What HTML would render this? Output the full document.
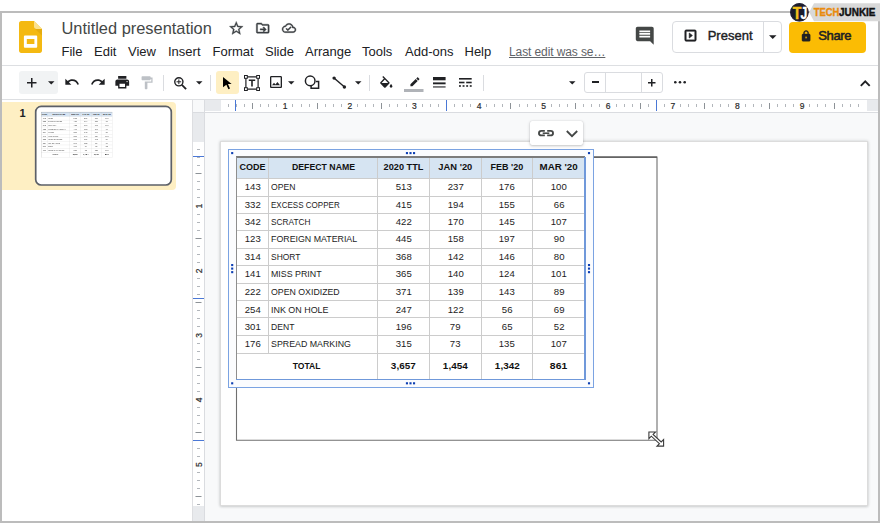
<!DOCTYPE html>
<html lang="en">
<head>
<meta charset="utf-8">
<title>Untitled presentation - Google Slides</title>
<style>
*{box-sizing:border-box;margin:0;padding:0}
html,body{width:884px;height:523px;background:#fff;overflow:hidden}
body{position:relative;font-family:"Liberation Sans",Arial,sans-serif;color:#202124}
.abs{position:absolute}
#frame{left:0;top:11px;width:880px;height:512px;border:2px solid #bcbcbc;background:#fff}
#hdrline{left:2px;top:65px;width:876px;height:1px;background:#dddfe2}
#tbline{left:2px;top:99px;width:876px;height:1px;background:#dddfe2}
#title{left:61.500px;top:17px;font-size:16.400px;line-height:22px;color:#444746;white-space:nowrap}
.menu{top:43.500px;font-size:13px;line-height:16px;color:#202124;white-space:nowrap}
#lastedit{color:#5f6368;text-decoration:underline;font-size:12px;letter-spacing:-.1px}
svg{display:block;position:absolute;overflow:visible}
.sep{width:1px;top:74.500px;height:16.500px;background:#dadce0}
#present{left:672px;top:21px;width:110px;height:32px;border:1px solid #dadce0;border-radius:4px;background:#fff}
#presentdiv{left:763px;top:22px;width:1px;height:30px;background:#dadce0}
#presenttxt{left:707.700px;top:28px;font-size:13px;line-height:16px;color:#202124;-webkit-text-stroke:.4px #202124}
#share{left:789px;top:21.500px;width:77px;height:31px;border-radius:4px;background:#fbbc04}
#sharetxt{left:818.300px;top:28px;font-size:13px;line-height:16px;color:#202124;-webkit-text-stroke:.55px #202124;letter-spacing:-.4px}
#panelsel{left:2px;top:102px;width:174px;height:88px;background:#feefc3;border-radius:0 4px 4px 0}
#thumb{left:35.500px;top:106.200px;width:136px;height:79px;border-radius:6px;background:#fff;overflow:hidden}
#slidenum{left:19.500px;top:106px;font-size:11px;line-height:14px;font-weight:bold;color:#202124}
#paneldiv{left:191px;top:100px;width:1px;height:421px;background:#e4e5e7}
#canvas{left:192px;top:100px;width:686px;height:421px;background:#f8f9fa}
#hruler{left:204px;top:100px;width:674px;height:12.500px;background:#fff;border-bottom:1px solid #dadce0;overflow:hidden}
#vruler{left:192px;top:112px;width:13px;height:409px;background:#fff;border-right:1px solid #dadce0;border-left:1px solid #dddee1;overflow:hidden}
#rcorner{left:192px;top:100px;width:13px;height:12.500px;background:#f8f9fa;border-right:1px solid #dadce0;border-bottom:1px solid #dadce0;border-left:1px solid #dddee1}
.rgrey{background:#e8eaed}
#slide{left:220px;top:141px;width:648px;height:365px;background:#fff;border:1px solid #dcdcdc;box-shadow:0 0 3px rgba(60,64,67,.22),0 1px 2px rgba(60,64,67,.12)}

.tbl{position:absolute;font-family:"Liberation Sans",Arial,sans-serif;font-size:9px;color:#1c1c1c}
.tl{position:absolute}
.tc{position:absolute;text-align:center;white-space:nowrap;overflow:visible}
.tc span{display:inline-block;transform:scaleX(.945);transform-origin:50% 50%}
.tc.tlft{text-align:left;padding-left:2.300px}
.tc.tlft span{transform-origin:0 50%}
.tb{font-weight:bold;color:#111}
.tb span{transform:scaleX(.98)}
.tn{font-size:9.300px}
.tn span{transform:scaleX(1.03)}
.tc.tlft span{transform:scaleX(.96)}
.hd{width:2px;height:2px;background:#0f41b4}
.hd{width:2px;height:2px;background:#0f41b4}
</style>
</head>
<body>
<div id="frame" class="abs"></div>

<!-- header -->
<div id="title" class="abs">Untitled presentation</div>
<div class="abs menu" style="left:61.5px">File</div>
<div class="abs menu" style="left:94px">Edit</div>
<div class="abs menu" style="left:128px">View</div>
<div class="abs menu" style="left:168px">Insert</div>
<div class="abs menu" style="left:212.5px">Format</div>
<div class="abs menu" style="left:265px">Slide</div>
<div class="abs menu" style="left:305px">Arrange</div>
<div class="abs menu" style="left:362px">Tools</div>
<div class="abs menu" style="left:405px">Add-ons</div>
<div class="abs menu" style="left:464.5px">Help</div>
<div class="abs menu" id="lastedit" style="left:509px">Last edit was se…</div>

<div id="present" class="abs"></div>
<div id="presentdiv" class="abs"></div>
<div id="share" class="abs"></div>
<!-- slides logo -->
<svg class="abs" style="left:19px;top:20.5px" width="23" height="32" viewBox="0 0 23 32">
 <path d="M2.2 0H15l8 8v21.8c0 1.2-1 2.2-2.2 2.2H2.2C1 32 0 31 0 29.800V2.200C0 1 1 0 2.200 0z" fill="#f4b912"/>
 <path d="M15 0l8 8h-5.800C16 8 15 7 15 5.800z" fill="#fbe18d"/>
 <path d="M15.600 7.400L23 14.500V8h-6z" fill="#d9a20d" opacity=".55"/>
 <path d="M5.900 14.600h11.300a1 1 0 0 1 1 1v10.200a1 1 0 0 1-1 1H5.900a1 1 0 0 1-1-1V15.600a1 1 0 0 1 1-1zm1.900 3.500v5h7.600v-5z" fill="#fff" fill-rule="evenodd"/>
</svg>
<!-- star -->
<svg class="abs" style="left:228.350px;top:19.950px" width="16.500" height="16.500" viewBox="0 0 24 24"><path fill="#3c4043" stroke="#3c4043" stroke-width=".5" d="M22 9.240l-7.190-.62L12 2 9.190 8.630 2 9.240l5.460 4.730L5.820 21 12 17.270 18.180 21l-1.630-7.030L22 9.240zM12 15.400l-3.760 2.270 1-4.280-3.320-2.880 4.380-.38L12 6.100l1.710 4.040 4.380.38-3.320 2.880 1 4.280L12 15.400z"/></svg>
<!-- move to folder -->
<svg class="abs" style="left:254.500px;top:20.900px" width="15.500" height="15.500" viewBox="0 0 24 24"><path fill="#3c4043" stroke="#3c4043" stroke-width=".6" d="M20 6h-8l-2-2H4c-1.100 0-2 .9-2 2v12c0 1.100.9 2 2 2h16c1.100 0 2-.9 2-2V8c0-1.100-.9-2-2-2zm0 12H4V6h5.170l2 2H20v10zm-7.840-1.410L13.580 18l4-4-4-4-1.410 1.410L13.750 13H8v2h5.750l-1.590 1.590z" transform="translate(0 -1)"/></svg>
<!-- cloud done -->
<svg class="abs" style="left:282px;top:20.970px" width="14" height="14" viewBox="0 0 24 24"><path fill="#3c4043" stroke="#3c4043" stroke-width=".6" d="M19.350 10.040C18.670 6.590 15.640 4 12 4 9.110 4 6.600 5.640 5.350 8.040 2.340 8.360 0 10.910 0 14c0 3.310 2.690 6 6 6h13c2.760 0 5-2.240 5-5 0-2.640-2.050-4.780-4.650-4.960zM19 18H6c-2.210 0-4-1.790-4-4s1.790-4 4-4h.71C7.370 7.690 9.480 6 12 6c3.040 0 5.500 2.460 5.500 5.500v.5H19c1.660 0 3 1.340 3 3s-1.340 3-3 3zm-9-3.820l-2.090-2.090L6.500 13.500 10 17l6.010-6.010-1.410-1.410z"/></svg>
<!-- comment -->
<svg class="abs" style="left:633.900px;top:25px" width="21.500" height="21.500" viewBox="0 0 24 24"><path fill="#444746" d="M21.990 4c0-1.100-.89-2-1.990-2H4c-1.100 0-2 .9-2 2v12c0 1.100.9 2 2 2h14l4 4-.01-18zM18 14H6v-2h12v2zm0-3H6V9h12v2zm0-3H6V6h12v2z"/></svg>
<!-- present icon -->
<svg class="abs" style="left:682.600px;top:28.300px" width="15" height="15" viewBox="0 0 24 24"><path fill="#202124" stroke="#202124" stroke-width="1.100" d="M10 8v8l5-4-5-4zm9-5H5c-1.100 0-2 .9-2 2v14c0 1.100.9 2 2 2h14c1.100 0 2-.9 2-2V5c0-1.100-.9-2-2-2zm0 16H5V5h14v14z"/></svg>
<svg class="abs" style="left:769px;top:35px" width="7.500" height="4" viewBox="0 0 10 5"><path fill="#202124" d="M0 0h10L5 5z"/></svg>
<!-- lock -->
<svg class="abs" style="left:799.900px;top:29.950px" width="12.200" height="12.200" viewBox="0 0 24 24"><path fill="#202124" stroke="#202124" stroke-width=".9" d="M18 8h-1V6c0-2.760-2.240-5-5-5S7 3.240 7 6v2H6c-1.100 0-2 .9-2 2v10c0 1.100.9 2 2 2h12c1.100 0 2-.9 2-2V10c0-1.100-.9-2-2-2zm-6 9c-1.100 0-2-.9-2-2s.9-2 2-2 2 .9 2 2-.9 2-2 2zm3.100-9H8.900V6c0-1.710 1.390-3.100 3.100-3.100 1.710 0 3.100 1.390 3.100 3.100v2z"/></svg>
<div id="hdrline" class="abs"></div>
<div id="presenttxt" class="abs">Present</div>
<div id="sharetxt" class="abs">Share</div>

<!-- toolbar -->

<div class="abs" style="left:19px;top:71px;width:39px;height:23px;background:#f1f3f4;border-radius:3px"></div>
<!-- plus -->
<svg class="abs" style="left:27px;top:78px" width="9.500" height="9.500" viewBox="0 0 10 10"><path fill="#202124" d="M4.200 0h1.600v4.200H10v1.600H5.800V10H4.200V5.800H0V4.200h4.200z"/></svg>
<svg class="abs" style="left:47.500px;top:81.300px" width="6.500" height="3.500" viewBox="0 0 10 5"><path fill="#202124" d="M0 0h10L5 5z"/></svg>
<!-- undo -->
<svg class="abs" style="left:64.300px;top:74.200px" width="16" height="16" viewBox="0 0 24 24"><path fill="#202124" d="M12.500 8c-2.650 0-5.050.99-6.900 2.600L2 7v9h9l-3.620-3.620c1.390-1.160 3.160-1.880 5.120-1.880 3.540 0 6.550 2.310 7.600 5.500l2.370-.78C21.080 11.030 17.150 8 12.500 8z"/></svg>
<!-- redo -->
<svg class="abs" style="left:89.900px;top:74.200px" width="16" height="16" viewBox="0 0 24 24"><path fill="#202124" d="M18.400 10.600C16.550 8.990 14.150 8 11.500 8c-4.650 0-8.580 3.030-9.960 7.220L3.900 16c1.050-3.190 4.050-5.500 7.600-5.500 1.950 0 3.730.72 5.120 1.880L13 16h9V7l-3.600 3.600z"/></svg>
<!-- print -->
<svg class="abs" style="left:113.800px;top:74.450px" width="16.500" height="16.500" viewBox="0 0 24 24"><path fill="#202124" d="M19 8H5c-1.660 0-3 1.340-3 3v6h4v4h12v-4h4v-6c0-1.660-1.340-3-3-3zm-3 11H8v-5h8v5zm3-7c-.55 0-1-.45-1-1s.45-1 1-1 1 .45 1 1-.45 1-1 1zm-1-9H6v4h12V3z"/></svg>
<!-- paint format -->
<svg class="abs" style="left:139px;top:75px" width="15.500" height="15.500" viewBox="0 0 24 24"><path fill="#bdc1c6" d="M18 4V3c0-.55-.45-1-1-1H5c-.55 0-1 .45-1 1v4c0 .55.450 1 1 1h12c.55 0 1-.45 1-1V6h1v4H9v11c0 .55.450 1 1 1h2c.55 0 1-.45 1-1v-9h8V4h-3z"/></svg>
<div class="abs sep" style="left:163px"></div>
<!-- zoom -->
<svg class="abs" style="left:173px;top:75.600px" width="15" height="15" viewBox="0 0 15 15"><g fill="none" stroke="#202124"><circle cx="5.850" cy="5.800" r="4.100" stroke-width="1.400"/><path d="M8.900 8.900l4.200 4.200" stroke-width="1.800"/><path d="M3.500 5.800h4.700M5.850 3.450v4.700" stroke-width="1"/></g></svg>
<svg class="abs" style="left:196px;top:81.300px" width="6.500" height="3.500" viewBox="0 0 10 5"><path fill="#202124" d="M0 0h10L5 5z"/></svg>
<div class="abs sep" style="left:210.400px"></div>
<!-- select -->
<div class="abs" style="left:216px;top:71px;width:23px;height:23px;background:#feefc3;border-radius:3px"></div>
<svg class="abs" style="left:223.300px;top:76.600px" width="8.900" height="12.200" viewBox="0 0 9.500 13"><path fill="#000" d="M0 0l9.200 7.600H5.300l2.200 4.600-1.700.8-2.200-4.700L0 11z"/></svg>
<!-- text box -->
<svg class="abs" style="left:244.400px;top:75.300px" width="16" height="16" viewBox="0 0 16 16"><g fill="none" stroke="#202124" stroke-width="1.200"><path d="M1.900 1.900h12.200v12.200H1.900z"/></g><g fill="#fff" stroke="#202124" stroke-width="1"><rect x=".5" y=".5" width="2.800" height="2.800"/><rect x="12.700" y=".5" width="2.800" height="2.800"/><rect x=".5" y="12.700" width="2.800" height="2.800"/><rect x="12.700" y="12.700" width="2.800" height="2.800"/></g><path fill="#202124" d="M4.800 4.600h6.400v1.500H8.800v5.400H7.200V6.100H4.800z"/></svg>
<!-- image -->
<svg class="abs" style="left:268px;top:74.400px" width="16" height="16" viewBox="0 0 24 24"><path fill="#202124" d="M19 5v14H5V5h14m0-2H5c-1.100 0-2 .9-2 2v14c0 1.100.9 2 2 2h14c1.100 0 2-.9 2-2V5c0-1.100-.9-2-2-2zm-4.860 8.860l-3 3.870L9 13.140 6 17h12l-3.860-5.140z"/></svg>
<svg class="abs" style="left:288px;top:81.300px" width="6.500" height="3.500" viewBox="0 0 10 5"><path fill="#202124" d="M0 0h10L5 5z"/></svg>
<!-- shape -->
<svg class="abs" style="left:304.300px;top:75px" width="16" height="16" viewBox="0 0 16 16"><g fill="none" stroke="#202124" stroke-width="1.500"><circle cx="6.200" cy="5.900" r="4.800"/><path d="M12 6.600h2.600v6.600H7.100v-2.400"/></g></svg>
<!-- line -->
<svg class="abs" style="left:331.800px;top:76.200px" width="15" height="13" viewBox="0 0 15 13"><path stroke="#202124" stroke-width="1.500" d="M2 2l10.500 9"/><circle cx="2.100" cy="2.100" r="1.700" fill="#202124"/><circle cx="12.400" cy="11" r="1.700" fill="#202124"/></svg>
<svg class="abs" style="left:354.500px;top:81.300px" width="6.500" height="3.500" viewBox="0 0 10 5"><path fill="#202124" d="M0 0h10L5 5z"/></svg>
<div class="abs sep" style="left:369px"></div>
<!-- fill -->
<svg class="abs" style="left:377.500px;top:76.300px" width="16.500" height="16.500" viewBox="0 0 24 24"><path fill="#202124" d="M16.560 8.940L7.620 0 6.210 1.410l2.380 2.380-5.150 5.150c-.59.590-.59 1.540 0 2.120l5.500 5.500c.29.290.68.440 1.060.44s.77-.15 1.060-.44l5.500-5.500c.59-.58.590-1.530 0-2.120zM5.210 10L10 5.210 14.790 10H5.210zM19 11.500s-2 2.170-2 3.500c0 1.100.9 2 2 2s2-.9 2-2c0-1.330-2-3.500-2-3.500z"/></svg>
<!-- border colour -->
<svg class="abs" style="left:403.500px;top:76.500px" width="19.500" height="15" viewBox="0 0 19.500 15"><path fill="#202124" transform="translate(4.300 0.300) scale(.53)" d="M17.750 7L14 3.250l-10 10V17h3.750l10-10zm2.960-2.960c.39-.39.390-1.020 0-1.410L18.370.29c-.39-.39-1.020-.39-1.410 0L15 2.250 18.750 6l1.960-1.960z"/><rect x="0" y="12" width="19.500" height="3" fill="#b0b3b8"/></svg>
<!-- border weight -->
<svg class="abs" style="left:432.900px;top:77px" width="12.600" height="11" viewBox="0 0 12.600 11"><g fill="#202124"><rect x="0" y="0" width="12.600" height="3.300"/><rect x="0" y="5.400" width="12.600" height="1.900"/><rect x="0" y="9.400" width="12.600" height="1.100"/></g></svg>
<!-- border dash -->
<svg class="abs" style="left:459.100px;top:78.400px" width="12.700" height="9" viewBox="0 0 12.700 9"><g fill="#202124"><rect x="0" y="0" width="12.700" height="1.600"/><rect x="0" y="3.700" width="5.500" height="1.600"/><rect x="7.200" y="3.700" width="5.500" height="1.600"/><rect x="0" y="7.200" width="1.900" height="1.600"/><rect x="3.600" y="7.200" width="1.900" height="1.600"/><rect x="7.200" y="7.200" width="1.900" height="1.600"/><rect x="10.800" y="7.200" width="1.900" height="1.600"/></g></svg>
<div class="abs sep" style="left:483px"></div>
<svg class="abs" style="left:569px;top:81.300px" width="6.500" height="3.500" viewBox="0 0 10 5"><path fill="#202124" d="M0 0h10L5 5z"/></svg>
<!-- font size box -->
<div class="abs" style="left:584px;top:72px;width:79px;height:21px;border:1px solid #dadce0;border-radius:3px;background:#fff"></div>
<div class="abs" style="left:605px;top:73px;width:1px;height:19px;background:#dadce0"></div>
<div class="abs" style="left:641px;top:73px;width:1px;height:19px;background:#dadce0"></div>
<div class="abs" style="left:591.500px;top:81.200px;width:7.500px;height:2px;background:#202124"></div>
<svg class="abs" style="left:647.500px;top:79px" width="7.500" height="7.500" viewBox="0 0 10 10"><path fill="#202124" d="M4 0h2v4h4v2H6v4H4V6H0V4h4z"/></svg>
<!-- more -->
<svg class="abs" style="left:673.500px;top:81.200px" width="12" height="2.600" viewBox="0 0 12 2.600"><g fill="#202124"><circle cx="1.300" cy="1.300" r="1.300"/><circle cx="6" cy="1.300" r="1.300"/><circle cx="10.700" cy="1.300" r="1.300"/></g></svg>
<!-- collapse chevron -->
<svg class="abs" style="left:860px;top:80px" width="10.500" height="6.500" viewBox="0 0 10.500 6.500"><path fill="none" stroke="#202124" stroke-width="1.900" d="M.8 5.800l4.450-4.500 4.450 4.500"/></svg>
<div id="tbline" class="abs"></div>

<!-- left panel -->
<div id="panelsel" class="abs"></div>
<div id="slidenum" class="abs">1</div>
<div id="thumb" class="abs"></div>
<div id="tbl2" class="tbl" style="left:41.400px;top:112.300px;width:349px;height:223px;transform:scale(.2042);transform-origin:0 0;color:#444">
<div class="tl" style="left:0;top:0;width:348.6px;height:21.6px;background:#d6e4f2"></div>
<div class="tl" style="left:0;top:21.1px;width:348.6px;height:1px;background:#cccccc"></div>
<div class="tl" style="left:0;top:38.9px;width:348.6px;height:1px;background:#cccccc"></div>
<div class="tl" style="left:0;top:56.1px;width:348.6px;height:1px;background:#cccccc"></div>
<div class="tl" style="left:0;top:73.3px;width:348.6px;height:1px;background:#cccccc"></div>
<div class="tl" style="left:0;top:91.0px;width:348.6px;height:1px;background:#cccccc"></div>
<div class="tl" style="left:0;top:108.3px;width:348.6px;height:1px;background:#cccccc"></div>
<div class="tl" style="left:0;top:125.8px;width:348.6px;height:1px;background:#cccccc"></div>
<div class="tl" style="left:0;top:143.5px;width:348.6px;height:1px;background:#cccccc"></div>
<div class="tl" style="left:0;top:160.7px;width:348.6px;height:1px;background:#cccccc"></div>
<div class="tl" style="left:0;top:178.1px;width:348.6px;height:1px;background:#cccccc"></div>
<div class="tl" style="left:0;top:196.0px;width:348.6px;height:1px;background:#cccccc"></div>
<div class="tl" style="left:32.3px;top:0;width:1px;height:196.5px;background:#cccccc"></div>
<div class="tl" style="left:140.8px;top:0;width:1px;height:222.5px;background:#cccccc"></div>
<div class="tl" style="left:192.8px;top:0;width:1px;height:222.5px;background:#cccccc"></div>
<div class="tl" style="left:244.5px;top:0;width:1px;height:222.5px;background:#cccccc"></div>
<div class="tl" style="left:296.0px;top:0;width:1px;height:222.5px;background:#cccccc"></div>
<div class="tl" style="left:0;top:-0.600px;width:348.6px;height:1.900px;background:#7c7c7c"></div>
<div class="tl" style="left:-0.200px;top:0;width:1.100px;height:222.5px;background:#8e8e8e"></div>
<div class="tl" style="left:348.2px;top:0;width:1.300px;height:223.4px;background:#cccccc"></div>
<div class="tl" style="left:0;top:222.1px;width:349.5px;height:1.300px;background:#cccccc"></div>
<div class="tc tb" style="left:0.0px;top:0.6px;width:32.8px;height:21.6px;line-height:21.6px;"><span style="transform:scaleX(1.000)">CODE</span></div>
<div class="tc tb" style="left:32.8px;top:0.6px;width:108.5px;height:21.6px;line-height:21.6px;"><span style="transform:scaleX(0.970)">DEFECT NAME</span></div>
<div class="tc tb" style="left:141.3px;top:0.6px;width:52.0px;height:21.6px;line-height:21.6px;"><span style="transform:scaleX(1.020)">2020 TTL</span></div>
<div class="tc tb" style="left:193.3px;top:0.6px;width:51.7px;height:21.6px;line-height:21.6px;"><span style="transform:scaleX(1.040)">JAN '20</span></div>
<div class="tc tb" style="left:245.0px;top:0.6px;width:51.5px;height:21.6px;line-height:21.6px;"><span style="transform:scaleX(1.000)">FEB '20</span></div>
<div class="tc tb" style="left:296.5px;top:0.6px;width:52.1px;height:21.6px;line-height:21.6px;"><span style="transform:scaleX(1.086)">MAR '20</span></div>
<div class="tc tn" style="left:0.0px;top:22.4px;width:32.8px;height:17.8px;line-height:17.8px;"><span>143</span></div>
<div class="tc tlft" style="left:32.8px;top:22.4px;width:108.5px;height:17.8px;line-height:17.8px;"><span style="transform:scaleX(0.956)">OPEN</span></div>
<div class="tc tn" style="left:141.3px;top:22.4px;width:52.0px;height:17.8px;line-height:17.8px;"><span>513</span></div>
<div class="tc tn" style="left:193.3px;top:22.4px;width:51.7px;height:17.8px;line-height:17.8px;"><span>237</span></div>
<div class="tc tn" style="left:245.0px;top:22.4px;width:51.5px;height:17.8px;line-height:17.8px;"><span>176</span></div>
<div class="tc tn" style="left:296.5px;top:22.4px;width:52.1px;height:17.8px;line-height:17.8px;"><span>100</span></div>
<div class="tc tn" style="left:0.0px;top:40.2px;width:32.8px;height:17.2px;line-height:17.2px;"><span>332</span></div>
<div class="tc tlft" style="left:32.8px;top:40.2px;width:108.5px;height:17.2px;line-height:17.2px;"><span style="transform:scaleX(0.892)">EXCESS COPPER</span></div>
<div class="tc tn" style="left:141.3px;top:40.2px;width:52.0px;height:17.2px;line-height:17.2px;"><span>415</span></div>
<div class="tc tn" style="left:193.3px;top:40.2px;width:51.7px;height:17.2px;line-height:17.2px;"><span>194</span></div>
<div class="tc tn" style="left:245.0px;top:40.2px;width:51.5px;height:17.2px;line-height:17.2px;"><span>155</span></div>
<div class="tc tn" style="left:296.5px;top:40.2px;width:52.1px;height:17.2px;line-height:17.2px;"><span>66</span></div>
<div class="tc tn" style="left:0.0px;top:57.4px;width:32.8px;height:17.2px;line-height:17.2px;"><span>342</span></div>
<div class="tc tlft" style="left:32.8px;top:57.4px;width:108.5px;height:17.2px;line-height:17.2px;"><span style="transform:scaleX(0.920)">SCRATCH</span></div>
<div class="tc tn" style="left:141.3px;top:57.4px;width:52.0px;height:17.2px;line-height:17.2px;"><span>422</span></div>
<div class="tc tn" style="left:193.3px;top:57.4px;width:51.7px;height:17.2px;line-height:17.2px;"><span>170</span></div>
<div class="tc tn" style="left:245.0px;top:57.4px;width:51.5px;height:17.2px;line-height:17.2px;"><span>145</span></div>
<div class="tc tn" style="left:296.5px;top:57.4px;width:52.1px;height:17.2px;line-height:17.2px;"><span>107</span></div>
<div class="tc tn" style="left:0.0px;top:74.6px;width:32.8px;height:17.7px;line-height:17.7px;"><span>123</span></div>
<div class="tc tlft" style="left:32.8px;top:74.6px;width:108.5px;height:17.7px;line-height:17.7px;"><span style="transform:scaleX(0.981)">FOREIGN MATERIAL</span></div>
<div class="tc tn" style="left:141.3px;top:74.6px;width:52.0px;height:17.7px;line-height:17.7px;"><span>445</span></div>
<div class="tc tn" style="left:193.3px;top:74.6px;width:51.7px;height:17.7px;line-height:17.7px;"><span>158</span></div>
<div class="tc tn" style="left:245.0px;top:74.6px;width:51.5px;height:17.7px;line-height:17.7px;"><span>197</span></div>
<div class="tc tn" style="left:296.5px;top:74.6px;width:52.1px;height:17.7px;line-height:17.7px;"><span>90</span></div>
<div class="tc tn" style="left:0.0px;top:92.3px;width:32.8px;height:17.3px;line-height:17.3px;"><span>314</span></div>
<div class="tc tlft" style="left:32.8px;top:92.3px;width:108.5px;height:17.3px;line-height:17.3px;"><span style="transform:scaleX(0.938)">SHORT</span></div>
<div class="tc tn" style="left:141.3px;top:92.3px;width:52.0px;height:17.3px;line-height:17.3px;"><span>368</span></div>
<div class="tc tn" style="left:193.3px;top:92.3px;width:51.7px;height:17.3px;line-height:17.3px;"><span>142</span></div>
<div class="tc tn" style="left:245.0px;top:92.3px;width:51.5px;height:17.3px;line-height:17.3px;"><span>146</span></div>
<div class="tc tn" style="left:296.5px;top:92.3px;width:52.1px;height:17.3px;line-height:17.3px;"><span>80</span></div>
<div class="tc tn" style="left:0.0px;top:109.6px;width:32.8px;height:17.5px;line-height:17.5px;"><span>141</span></div>
<div class="tc tlft" style="left:32.8px;top:109.6px;width:108.5px;height:17.5px;line-height:17.5px;"><span style="transform:scaleX(0.982)">MISS PRINT</span></div>
<div class="tc tn" style="left:141.3px;top:109.6px;width:52.0px;height:17.5px;line-height:17.5px;"><span>365</span></div>
<div class="tc tn" style="left:193.3px;top:109.6px;width:51.7px;height:17.5px;line-height:17.5px;"><span>140</span></div>
<div class="tc tn" style="left:245.0px;top:109.6px;width:51.5px;height:17.5px;line-height:17.5px;"><span>124</span></div>
<div class="tc tn" style="left:296.5px;top:109.6px;width:52.1px;height:17.5px;line-height:17.5px;"><span>101</span></div>
<div class="tc tn" style="left:0.0px;top:127.1px;width:32.8px;height:17.7px;line-height:17.7px;"><span>222</span></div>
<div class="tc tlft" style="left:32.8px;top:127.1px;width:108.5px;height:17.7px;line-height:17.7px;"><span style="transform:scaleX(0.974)">OPEN OXIDIZED</span></div>
<div class="tc tn" style="left:141.3px;top:127.1px;width:52.0px;height:17.7px;line-height:17.7px;"><span>371</span></div>
<div class="tc tn" style="left:193.3px;top:127.1px;width:51.7px;height:17.7px;line-height:17.7px;"><span>139</span></div>
<div class="tc tn" style="left:245.0px;top:127.1px;width:51.5px;height:17.7px;line-height:17.7px;"><span>143</span></div>
<div class="tc tn" style="left:296.5px;top:127.1px;width:52.1px;height:17.7px;line-height:17.7px;"><span>89</span></div>
<div class="tc tn" style="left:0.0px;top:144.8px;width:32.8px;height:17.2px;line-height:17.2px;"><span>254</span></div>
<div class="tc tlft" style="left:32.8px;top:144.8px;width:108.5px;height:17.2px;line-height:17.2px;"><span style="transform:scaleX(0.991)">INK ON HOLE</span></div>
<div class="tc tn" style="left:141.3px;top:144.8px;width:52.0px;height:17.2px;line-height:17.2px;"><span>247</span></div>
<div class="tc tn" style="left:193.3px;top:144.8px;width:51.7px;height:17.2px;line-height:17.2px;"><span>122</span></div>
<div class="tc tn" style="left:245.0px;top:144.8px;width:51.5px;height:17.2px;line-height:17.2px;"><span>56</span></div>
<div class="tc tn" style="left:296.5px;top:144.8px;width:52.1px;height:17.2px;line-height:17.2px;"><span>69</span></div>
<div class="tc tn" style="left:0.0px;top:162.0px;width:32.8px;height:17.4px;line-height:17.4px;"><span>301</span></div>
<div class="tc tlft" style="left:32.8px;top:162.0px;width:108.5px;height:17.4px;line-height:17.4px;"><span style="transform:scaleX(0.955)">DENT</span></div>
<div class="tc tn" style="left:141.3px;top:162.0px;width:52.0px;height:17.4px;line-height:17.4px;"><span>196</span></div>
<div class="tc tn" style="left:193.3px;top:162.0px;width:51.7px;height:17.4px;line-height:17.4px;"><span>79</span></div>
<div class="tc tn" style="left:245.0px;top:162.0px;width:51.5px;height:17.4px;line-height:17.4px;"><span>65</span></div>
<div class="tc tn" style="left:296.5px;top:162.0px;width:52.1px;height:17.4px;line-height:17.4px;"><span>52</span></div>
<div class="tc tn" style="left:0.0px;top:179.4px;width:32.8px;height:17.9px;line-height:17.9px;"><span>176</span></div>
<div class="tc tlft" style="left:32.8px;top:179.4px;width:108.5px;height:17.9px;line-height:17.9px;"><span style="transform:scaleX(0.980)">SPREAD MARKING</span></div>
<div class="tc tn" style="left:141.3px;top:179.4px;width:52.0px;height:17.9px;line-height:17.9px;"><span>315</span></div>
<div class="tc tn" style="left:193.3px;top:179.4px;width:51.7px;height:17.9px;line-height:17.9px;"><span>73</span></div>
<div class="tc tn" style="left:245.0px;top:179.4px;width:51.5px;height:17.9px;line-height:17.9px;"><span>135</span></div>
<div class="tc tn" style="left:296.5px;top:179.4px;width:52.1px;height:17.9px;line-height:17.9px;"><span>107</span></div>
<div class="tc tb" style="left:0.0px;top:195.9px;width:141.3px;height:26.0px;line-height:26.0px;"><span style="transform:scaleX(0.950)">TOTAL</span></div>
<div class="tc tb" style="left:141.3px;top:195.9px;width:52.0px;height:26.0px;line-height:26.0px;"><span style="transform:scaleX(1.100)">3,657</span></div>
<div class="tc tb" style="left:193.3px;top:195.9px;width:51.7px;height:26.0px;line-height:26.0px;"><span style="transform:scaleX(1.100)">1,454</span></div>
<div class="tc tb" style="left:245.0px;top:195.9px;width:51.5px;height:26.0px;line-height:26.0px;"><span style="transform:scaleX(1.100)">1,342</span></div>
<div class="tc tb" style="left:296.5px;top:195.9px;width:52.1px;height:26.0px;line-height:26.0px;"><span style="transform:scaleX(1.150)">861</span></div>
</div>

<svg class="abs" style="left:0;top:0" width="200" height="200" viewBox="0 0 200 200"><rect x="35.700" y="106.400" width="135.600" height="78.600" rx="5.500" fill="none" stroke="#5c6068" stroke-width="1.700"/></svg>

<!-- canvas -->
<div id="canvas" class="abs"></div>
<div id="hruler" class="abs"><div class="abs rgrey" style="left:0;top:0;width:16.6px;height:11px"></div><div class="abs rgrey" style="left:663.0px;top:0;width:20px;height:11px"></div><svg class="abs" style="left:0;top:0" width="674" height="11" viewBox="0 0 674 11" font-family="Liberation Sans, sans-serif" font-size="8.500" fill="#2b2b2b" stroke="#2b2b2b" stroke-width=".2"><rect x="24" y="4" width="1" height="3" fill="#b2b6bb" stroke="none"/><rect x="32" y="4" width="1" height="3" fill="#b2b6bb" stroke="none"/><rect x="40" y="4" width="1" height="3" fill="#b2b6bb" stroke="none"/><rect x="48" y="3" width="1" height="6" fill="#8d9297" stroke="none"/><rect x="56" y="4" width="1" height="3" fill="#b2b6bb" stroke="none"/><rect x="64" y="4" width="1" height="3" fill="#b2b6bb" stroke="none"/><rect x="72" y="4" width="1" height="3" fill="#b2b6bb" stroke="none"/><text x="81.2" y="9.1" text-anchor="middle">1</text><rect x="88" y="4" width="1" height="3" fill="#b2b6bb" stroke="none"/><rect x="97" y="4" width="1" height="3" fill="#b2b6bb" stroke="none"/><rect x="105" y="4" width="1" height="3" fill="#b2b6bb" stroke="none"/><rect x="113" y="3" width="1" height="6" fill="#8d9297" stroke="none"/><rect x="121" y="4" width="1" height="3" fill="#b2b6bb" stroke="none"/><rect x="129" y="4" width="1" height="3" fill="#b2b6bb" stroke="none"/><rect x="137" y="4" width="1" height="3" fill="#b2b6bb" stroke="none"/><text x="145.8" y="9.1" text-anchor="middle">2</text><rect x="153" y="4" width="1" height="3" fill="#b2b6bb" stroke="none"/><rect x="161" y="4" width="1" height="3" fill="#b2b6bb" stroke="none"/><rect x="169" y="4" width="1" height="3" fill="#b2b6bb" stroke="none"/><rect x="177" y="3" width="1" height="6" fill="#8d9297" stroke="none"/><rect x="185" y="4" width="1" height="3" fill="#b2b6bb" stroke="none"/><rect x="193" y="4" width="1" height="3" fill="#b2b6bb" stroke="none"/><rect x="202" y="4" width="1" height="3" fill="#b2b6bb" stroke="none"/><text x="210.4" y="9.1" text-anchor="middle">3</text><rect x="218" y="4" width="1" height="3" fill="#b2b6bb" stroke="none"/><rect x="226" y="4" width="1" height="3" fill="#b2b6bb" stroke="none"/><rect x="234" y="4" width="1" height="3" fill="#b2b6bb" stroke="none"/><rect x="242" y="3" width="1" height="6" fill="#8d9297" stroke="none"/><rect x="250" y="4" width="1" height="3" fill="#b2b6bb" stroke="none"/><rect x="258" y="4" width="1" height="3" fill="#b2b6bb" stroke="none"/><rect x="266" y="4" width="1" height="3" fill="#b2b6bb" stroke="none"/><text x="275.0" y="9.1" text-anchor="middle">4</text><rect x="282" y="4" width="1" height="3" fill="#b2b6bb" stroke="none"/><rect x="290" y="4" width="1" height="3" fill="#b2b6bb" stroke="none"/><rect x="298" y="4" width="1" height="3" fill="#b2b6bb" stroke="none"/><rect x="306" y="3" width="1" height="6" fill="#8d9297" stroke="none"/><rect x="315" y="4" width="1" height="3" fill="#b2b6bb" stroke="none"/><rect x="323" y="4" width="1" height="3" fill="#b2b6bb" stroke="none"/><rect x="331" y="4" width="1" height="3" fill="#b2b6bb" stroke="none"/><text x="339.6" y="9.1" text-anchor="middle">5</text><rect x="347" y="4" width="1" height="3" fill="#b2b6bb" stroke="none"/><rect x="355" y="4" width="1" height="3" fill="#b2b6bb" stroke="none"/><rect x="363" y="4" width="1" height="3" fill="#b2b6bb" stroke="none"/><rect x="371" y="3" width="1" height="6" fill="#8d9297" stroke="none"/><rect x="379" y="4" width="1" height="3" fill="#b2b6bb" stroke="none"/><rect x="387" y="4" width="1" height="3" fill="#b2b6bb" stroke="none"/><rect x="395" y="4" width="1" height="3" fill="#b2b6bb" stroke="none"/><text x="404.2" y="9.1" text-anchor="middle">6</text><rect x="412" y="4" width="1" height="3" fill="#b2b6bb" stroke="none"/><rect x="420" y="4" width="1" height="3" fill="#b2b6bb" stroke="none"/><rect x="428" y="4" width="1" height="3" fill="#b2b6bb" stroke="none"/><rect x="436" y="3" width="1" height="6" fill="#8d9297" stroke="none"/><rect x="444" y="4" width="1" height="3" fill="#b2b6bb" stroke="none"/><rect x="452" y="4" width="1" height="3" fill="#b2b6bb" stroke="none"/><rect x="460" y="4" width="1" height="3" fill="#b2b6bb" stroke="none"/><text x="468.8" y="9.1" text-anchor="middle">7</text><rect x="476" y="4" width="1" height="3" fill="#b2b6bb" stroke="none"/><rect x="484" y="4" width="1" height="3" fill="#b2b6bb" stroke="none"/><rect x="492" y="4" width="1" height="3" fill="#b2b6bb" stroke="none"/><rect x="500" y="3" width="1" height="6" fill="#8d9297" stroke="none"/><rect x="508" y="4" width="1" height="3" fill="#b2b6bb" stroke="none"/><rect x="516" y="4" width="1" height="3" fill="#b2b6bb" stroke="none"/><rect x="524" y="4" width="1" height="3" fill="#b2b6bb" stroke="none"/><text x="533.4" y="9.1" text-anchor="middle">8</text><rect x="541" y="4" width="1" height="3" fill="#b2b6bb" stroke="none"/><rect x="549" y="4" width="1" height="3" fill="#b2b6bb" stroke="none"/><rect x="557" y="4" width="1" height="3" fill="#b2b6bb" stroke="none"/><rect x="565" y="3" width="1" height="6" fill="#8d9297" stroke="none"/><rect x="573" y="4" width="1" height="3" fill="#b2b6bb" stroke="none"/><rect x="581" y="4" width="1" height="3" fill="#b2b6bb" stroke="none"/><rect x="589" y="4" width="1" height="3" fill="#b2b6bb" stroke="none"/><text x="598.0" y="9.1" text-anchor="middle">9</text><rect x="605" y="4" width="1" height="3" fill="#b2b6bb" stroke="none"/><rect x="613" y="4" width="1" height="3" fill="#b2b6bb" stroke="none"/><rect x="621" y="4" width="1" height="3" fill="#b2b6bb" stroke="none"/><rect x="630" y="3" width="1" height="6" fill="#8d9297" stroke="none"/><rect x="638" y="4" width="1" height="3" fill="#b2b6bb" stroke="none"/><rect x="646" y="4" width="1" height="3" fill="#b2b6bb" stroke="none"/><rect x="654" y="4" width="1" height="3" fill="#b2b6bb" stroke="none"/></svg><div class="abs" style="left:30.9px;top:0;width:1.300px;height:11px;background:#4a78d6"></div><div class="abs" style="left:241.9px;top:0;width:1.300px;height:11px;background:#4a78d6"></div><div class="abs" style="left:452.1px;top:0;width:1.300px;height:11px;background:#4a78d6"></div></div>
<div id="vruler" class="abs"><div class="abs rgrey" style="left:0;top:0;width:11px;height:29.6px"></div><div class="abs rgrey" style="left:0;top:393.7px;width:11px;height:40px"></div><svg class="abs" style="left:0;top:0" width="11" height="409" viewBox="0 0 11 409" font-family="Liberation Sans, sans-serif" font-size="8.500" fill="#2b2b2b" stroke="#2b2b2b" stroke-width=".2"><rect y="37" x="4" height="1" width="3" fill="#b2b6bb" stroke="none"/><rect y="45" x="4" height="1" width="3" fill="#b2b6bb" stroke="none"/><rect y="53" x="4" height="1" width="3" fill="#b2b6bb" stroke="none"/><rect y="61" x="2.500" height="1" width="6" fill="#8d9297" stroke="none"/><rect y="69" x="4" height="1" width="3" fill="#b2b6bb" stroke="none"/><rect y="77" x="4" height="1" width="3" fill="#b2b6bb" stroke="none"/><rect y="85" x="4" height="1" width="3" fill="#b2b6bb" stroke="none"/><text transform="translate(9.100 94.2) rotate(-90)" text-anchor="middle">1</text><rect y="102" x="4" height="1" width="3" fill="#b2b6bb" stroke="none"/><rect y="110" x="4" height="1" width="3" fill="#b2b6bb" stroke="none"/><rect y="118" x="4" height="1" width="3" fill="#b2b6bb" stroke="none"/><rect y="126" x="2.500" height="1" width="6" fill="#8d9297" stroke="none"/><rect y="134" x="4" height="1" width="3" fill="#b2b6bb" stroke="none"/><rect y="142" x="4" height="1" width="3" fill="#b2b6bb" stroke="none"/><rect y="150" x="4" height="1" width="3" fill="#b2b6bb" stroke="none"/><text transform="translate(9.100 158.8) rotate(-90)" text-anchor="middle">2</text><rect y="166" x="4" height="1" width="3" fill="#b2b6bb" stroke="none"/><rect y="174" x="4" height="1" width="3" fill="#b2b6bb" stroke="none"/><rect y="182" x="4" height="1" width="3" fill="#b2b6bb" stroke="none"/><rect y="190" x="2.500" height="1" width="6" fill="#8d9297" stroke="none"/><rect y="198" x="4" height="1" width="3" fill="#b2b6bb" stroke="none"/><rect y="206" x="4" height="1" width="3" fill="#b2b6bb" stroke="none"/><rect y="214" x="4" height="1" width="3" fill="#b2b6bb" stroke="none"/><text transform="translate(9.100 223.4) rotate(-90)" text-anchor="middle">3</text><rect y="231" x="4" height="1" width="3" fill="#b2b6bb" stroke="none"/><rect y="239" x="4" height="1" width="3" fill="#b2b6bb" stroke="none"/><rect y="247" x="4" height="1" width="3" fill="#b2b6bb" stroke="none"/><rect y="255" x="2.500" height="1" width="6" fill="#8d9297" stroke="none"/><rect y="263" x="4" height="1" width="3" fill="#b2b6bb" stroke="none"/><rect y="271" x="4" height="1" width="3" fill="#b2b6bb" stroke="none"/><rect y="279" x="4" height="1" width="3" fill="#b2b6bb" stroke="none"/><text transform="translate(9.100 288.0) rotate(-90)" text-anchor="middle">4</text><rect y="295" x="4" height="1" width="3" fill="#b2b6bb" stroke="none"/><rect y="303" x="4" height="1" width="3" fill="#b2b6bb" stroke="none"/><rect y="311" x="4" height="1" width="3" fill="#b2b6bb" stroke="none"/><rect y="320" x="2.500" height="1" width="6" fill="#8d9297" stroke="none"/><rect y="328" x="4" height="1" width="3" fill="#b2b6bb" stroke="none"/><rect y="336" x="4" height="1" width="3" fill="#b2b6bb" stroke="none"/><rect y="344" x="4" height="1" width="3" fill="#b2b6bb" stroke="none"/><text transform="translate(9.100 352.6) rotate(-90)" text-anchor="middle">5</text><rect y="360" x="4" height="1" width="3" fill="#b2b6bb" stroke="none"/><rect y="368" x="4" height="1" width="3" fill="#b2b6bb" stroke="none"/><rect y="376" x="4" height="1" width="3" fill="#b2b6bb" stroke="none"/><rect y="384" x="2.500" height="1" width="6" fill="#8d9297" stroke="none"/><rect y="392" x="4" height="1" width="3" fill="#b2b6bb" stroke="none"/></svg><div class="abs" style="top:43.8px;left:0;height:1.300px;width:11px;background:#4a78d6"></div><div class="abs" style="top:185.7px;left:0;height:1.300px;width:11px;background:#4a78d6"></div><div class="abs" style="top:327.5px;left:0;height:1.300px;width:11px;background:#4a78d6"></div></div>
<div id="rcorner" class="abs"></div>
<div id="slide" class="abs"></div>
<!-- text box outline -->
<svg class="abs" style="left:230px;top:150px" width="440" height="300" viewBox="230 150 440 300"><path d="M236.500 157.100H657V440.200H236.500z" fill="none" stroke="#707070" stroke-width="1.100"/><path d="M236.500 157.100H657" fill="none" stroke="#555" stroke-width="1.100"/></svg>
<!-- selection frame -->
<div class="abs" style="left:228px;top:149px;width:365.700px;height:239.300px;border:1.200px solid #7ba3e2;background:#fbfcfe"></div>
<div class="abs" style="left:236.200px;top:156.800px;width:349px;height:223px;background:#fff"></div>
<div id="tbl" class="tbl" style="left:236.200px;top:156.800px;width:349px;height:223px">
<div class="tl" style="left:0;top:0;width:348.6px;height:21.6px;background:#d6e4f2"></div>
<div class="tl" style="left:0;top:21.1px;width:348.6px;height:1px;background:#cccccc"></div>
<div class="tl" style="left:0;top:38.9px;width:348.6px;height:1px;background:#cccccc"></div>
<div class="tl" style="left:0;top:56.1px;width:348.6px;height:1px;background:#cccccc"></div>
<div class="tl" style="left:0;top:73.3px;width:348.6px;height:1px;background:#cccccc"></div>
<div class="tl" style="left:0;top:91.0px;width:348.6px;height:1px;background:#cccccc"></div>
<div class="tl" style="left:0;top:108.3px;width:348.6px;height:1px;background:#cccccc"></div>
<div class="tl" style="left:0;top:125.8px;width:348.6px;height:1px;background:#cccccc"></div>
<div class="tl" style="left:0;top:143.5px;width:348.6px;height:1px;background:#cccccc"></div>
<div class="tl" style="left:0;top:160.7px;width:348.6px;height:1px;background:#cccccc"></div>
<div class="tl" style="left:0;top:178.1px;width:348.6px;height:1px;background:#cccccc"></div>
<div class="tl" style="left:0;top:196.0px;width:348.6px;height:1px;background:#cccccc"></div>
<div class="tl" style="left:32.3px;top:0;width:1px;height:196.5px;background:#cccccc"></div>
<div class="tl" style="left:140.8px;top:0;width:1px;height:222.5px;background:#cccccc"></div>
<div class="tl" style="left:192.8px;top:0;width:1px;height:222.5px;background:#cccccc"></div>
<div class="tl" style="left:244.5px;top:0;width:1px;height:222.5px;background:#cccccc"></div>
<div class="tl" style="left:296.0px;top:0;width:1px;height:222.5px;background:#cccccc"></div>
<div class="tl" style="left:0;top:-0.600px;width:348.6px;height:1.900px;background:#7c7c7c"></div>
<div class="tl" style="left:-0.200px;top:0;width:1.100px;height:222.5px;background:#8e8e8e"></div>
<div class="tl" style="left:348.2px;top:0;width:1.300px;height:223.4px;background:#6f98da"></div>
<div class="tl" style="left:0;top:222.1px;width:349.5px;height:1.300px;background:#6f98da"></div>
<div class="tc tb" style="left:0.0px;top:0.6px;width:32.8px;height:21.6px;line-height:21.6px;"><span style="transform:scaleX(1.000)">CODE</span></div>
<div class="tc tb" style="left:32.8px;top:0.6px;width:108.5px;height:21.6px;line-height:21.6px;"><span style="transform:scaleX(0.970)">DEFECT NAME</span></div>
<div class="tc tb" style="left:141.3px;top:0.6px;width:52.0px;height:21.6px;line-height:21.6px;"><span style="transform:scaleX(1.020)">2020 TTL</span></div>
<div class="tc tb" style="left:193.3px;top:0.6px;width:51.7px;height:21.6px;line-height:21.6px;"><span style="transform:scaleX(1.040)">JAN '20</span></div>
<div class="tc tb" style="left:245.0px;top:0.6px;width:51.5px;height:21.6px;line-height:21.6px;"><span style="transform:scaleX(1.000)">FEB '20</span></div>
<div class="tc tb" style="left:296.5px;top:0.6px;width:52.1px;height:21.6px;line-height:21.6px;"><span style="transform:scaleX(1.086)">MAR '20</span></div>
<div class="tc tn" style="left:0.0px;top:22.4px;width:32.8px;height:17.8px;line-height:17.8px;"><span>143</span></div>
<div class="tc tlft" style="left:32.8px;top:22.4px;width:108.5px;height:17.8px;line-height:17.8px;"><span style="transform:scaleX(0.956)">OPEN</span></div>
<div class="tc tn" style="left:141.3px;top:22.4px;width:52.0px;height:17.8px;line-height:17.8px;"><span>513</span></div>
<div class="tc tn" style="left:193.3px;top:22.4px;width:51.7px;height:17.8px;line-height:17.8px;"><span>237</span></div>
<div class="tc tn" style="left:245.0px;top:22.4px;width:51.5px;height:17.8px;line-height:17.8px;"><span>176</span></div>
<div class="tc tn" style="left:296.5px;top:22.4px;width:52.1px;height:17.8px;line-height:17.8px;"><span>100</span></div>
<div class="tc tn" style="left:0.0px;top:40.2px;width:32.8px;height:17.2px;line-height:17.2px;"><span>332</span></div>
<div class="tc tlft" style="left:32.8px;top:40.2px;width:108.5px;height:17.2px;line-height:17.2px;"><span style="transform:scaleX(0.892)">EXCESS COPPER</span></div>
<div class="tc tn" style="left:141.3px;top:40.2px;width:52.0px;height:17.2px;line-height:17.2px;"><span>415</span></div>
<div class="tc tn" style="left:193.3px;top:40.2px;width:51.7px;height:17.2px;line-height:17.2px;"><span>194</span></div>
<div class="tc tn" style="left:245.0px;top:40.2px;width:51.5px;height:17.2px;line-height:17.2px;"><span>155</span></div>
<div class="tc tn" style="left:296.5px;top:40.2px;width:52.1px;height:17.2px;line-height:17.2px;"><span>66</span></div>
<div class="tc tn" style="left:0.0px;top:57.4px;width:32.8px;height:17.2px;line-height:17.2px;"><span>342</span></div>
<div class="tc tlft" style="left:32.8px;top:57.4px;width:108.5px;height:17.2px;line-height:17.2px;"><span style="transform:scaleX(0.920)">SCRATCH</span></div>
<div class="tc tn" style="left:141.3px;top:57.4px;width:52.0px;height:17.2px;line-height:17.2px;"><span>422</span></div>
<div class="tc tn" style="left:193.3px;top:57.4px;width:51.7px;height:17.2px;line-height:17.2px;"><span>170</span></div>
<div class="tc tn" style="left:245.0px;top:57.4px;width:51.5px;height:17.2px;line-height:17.2px;"><span>145</span></div>
<div class="tc tn" style="left:296.5px;top:57.4px;width:52.1px;height:17.2px;line-height:17.2px;"><span>107</span></div>
<div class="tc tn" style="left:0.0px;top:74.6px;width:32.8px;height:17.7px;line-height:17.7px;"><span>123</span></div>
<div class="tc tlft" style="left:32.8px;top:74.6px;width:108.5px;height:17.7px;line-height:17.7px;"><span style="transform:scaleX(0.981)">FOREIGN MATERIAL</span></div>
<div class="tc tn" style="left:141.3px;top:74.6px;width:52.0px;height:17.7px;line-height:17.7px;"><span>445</span></div>
<div class="tc tn" style="left:193.3px;top:74.6px;width:51.7px;height:17.7px;line-height:17.7px;"><span>158</span></div>
<div class="tc tn" style="left:245.0px;top:74.6px;width:51.5px;height:17.7px;line-height:17.7px;"><span>197</span></div>
<div class="tc tn" style="left:296.5px;top:74.6px;width:52.1px;height:17.7px;line-height:17.7px;"><span>90</span></div>
<div class="tc tn" style="left:0.0px;top:92.3px;width:32.8px;height:17.3px;line-height:17.3px;"><span>314</span></div>
<div class="tc tlft" style="left:32.8px;top:92.3px;width:108.5px;height:17.3px;line-height:17.3px;"><span style="transform:scaleX(0.938)">SHORT</span></div>
<div class="tc tn" style="left:141.3px;top:92.3px;width:52.0px;height:17.3px;line-height:17.3px;"><span>368</span></div>
<div class="tc tn" style="left:193.3px;top:92.3px;width:51.7px;height:17.3px;line-height:17.3px;"><span>142</span></div>
<div class="tc tn" style="left:245.0px;top:92.3px;width:51.5px;height:17.3px;line-height:17.3px;"><span>146</span></div>
<div class="tc tn" style="left:296.5px;top:92.3px;width:52.1px;height:17.3px;line-height:17.3px;"><span>80</span></div>
<div class="tc tn" style="left:0.0px;top:109.6px;width:32.8px;height:17.5px;line-height:17.5px;"><span>141</span></div>
<div class="tc tlft" style="left:32.8px;top:109.6px;width:108.5px;height:17.5px;line-height:17.5px;"><span style="transform:scaleX(0.982)">MISS PRINT</span></div>
<div class="tc tn" style="left:141.3px;top:109.6px;width:52.0px;height:17.5px;line-height:17.5px;"><span>365</span></div>
<div class="tc tn" style="left:193.3px;top:109.6px;width:51.7px;height:17.5px;line-height:17.5px;"><span>140</span></div>
<div class="tc tn" style="left:245.0px;top:109.6px;width:51.5px;height:17.5px;line-height:17.5px;"><span>124</span></div>
<div class="tc tn" style="left:296.5px;top:109.6px;width:52.1px;height:17.5px;line-height:17.5px;"><span>101</span></div>
<div class="tc tn" style="left:0.0px;top:127.1px;width:32.8px;height:17.7px;line-height:17.7px;"><span>222</span></div>
<div class="tc tlft" style="left:32.8px;top:127.1px;width:108.5px;height:17.7px;line-height:17.7px;"><span style="transform:scaleX(0.974)">OPEN OXIDIZED</span></div>
<div class="tc tn" style="left:141.3px;top:127.1px;width:52.0px;height:17.7px;line-height:17.7px;"><span>371</span></div>
<div class="tc tn" style="left:193.3px;top:127.1px;width:51.7px;height:17.7px;line-height:17.7px;"><span>139</span></div>
<div class="tc tn" style="left:245.0px;top:127.1px;width:51.5px;height:17.7px;line-height:17.7px;"><span>143</span></div>
<div class="tc tn" style="left:296.5px;top:127.1px;width:52.1px;height:17.7px;line-height:17.7px;"><span>89</span></div>
<div class="tc tn" style="left:0.0px;top:144.8px;width:32.8px;height:17.2px;line-height:17.2px;"><span>254</span></div>
<div class="tc tlft" style="left:32.8px;top:144.8px;width:108.5px;height:17.2px;line-height:17.2px;"><span style="transform:scaleX(0.991)">INK ON HOLE</span></div>
<div class="tc tn" style="left:141.3px;top:144.8px;width:52.0px;height:17.2px;line-height:17.2px;"><span>247</span></div>
<div class="tc tn" style="left:193.3px;top:144.8px;width:51.7px;height:17.2px;line-height:17.2px;"><span>122</span></div>
<div class="tc tn" style="left:245.0px;top:144.8px;width:51.5px;height:17.2px;line-height:17.2px;"><span>56</span></div>
<div class="tc tn" style="left:296.5px;top:144.8px;width:52.1px;height:17.2px;line-height:17.2px;"><span>69</span></div>
<div class="tc tn" style="left:0.0px;top:162.0px;width:32.8px;height:17.4px;line-height:17.4px;"><span>301</span></div>
<div class="tc tlft" style="left:32.8px;top:162.0px;width:108.5px;height:17.4px;line-height:17.4px;"><span style="transform:scaleX(0.955)">DENT</span></div>
<div class="tc tn" style="left:141.3px;top:162.0px;width:52.0px;height:17.4px;line-height:17.4px;"><span>196</span></div>
<div class="tc tn" style="left:193.3px;top:162.0px;width:51.7px;height:17.4px;line-height:17.4px;"><span>79</span></div>
<div class="tc tn" style="left:245.0px;top:162.0px;width:51.5px;height:17.4px;line-height:17.4px;"><span>65</span></div>
<div class="tc tn" style="left:296.5px;top:162.0px;width:52.1px;height:17.4px;line-height:17.4px;"><span>52</span></div>
<div class="tc tn" style="left:0.0px;top:179.4px;width:32.8px;height:17.9px;line-height:17.9px;"><span>176</span></div>
<div class="tc tlft" style="left:32.8px;top:179.4px;width:108.5px;height:17.9px;line-height:17.9px;"><span style="transform:scaleX(0.980)">SPREAD MARKING</span></div>
<div class="tc tn" style="left:141.3px;top:179.4px;width:52.0px;height:17.9px;line-height:17.9px;"><span>315</span></div>
<div class="tc tn" style="left:193.3px;top:179.4px;width:51.7px;height:17.9px;line-height:17.9px;"><span>73</span></div>
<div class="tc tn" style="left:245.0px;top:179.4px;width:51.5px;height:17.9px;line-height:17.9px;"><span>135</span></div>
<div class="tc tn" style="left:296.5px;top:179.4px;width:52.1px;height:17.9px;line-height:17.9px;"><span>107</span></div>
<div class="tc tb" style="left:0.0px;top:195.9px;width:141.3px;height:26.0px;line-height:26.0px;"><span style="transform:scaleX(0.950)">TOTAL</span></div>
<div class="tc tb" style="left:141.3px;top:195.9px;width:52.0px;height:26.0px;line-height:26.0px;"><span style="transform:scaleX(1.100)">3,657</span></div>
<div class="tc tb" style="left:193.3px;top:195.9px;width:51.7px;height:26.0px;line-height:26.0px;"><span style="transform:scaleX(1.100)">1,454</span></div>
<div class="tc tb" style="left:245.0px;top:195.9px;width:51.5px;height:26.0px;line-height:26.0px;"><span style="transform:scaleX(1.100)">1,342</span></div>
<div class="tc tb" style="left:296.5px;top:195.9px;width:52.1px;height:26.0px;line-height:26.0px;"><span style="transform:scaleX(1.150)">861</span></div>
</div>

<!-- selection handles -->
<svg class="abs" style="left:220px;top:140px" width="400" height="260" viewBox="220 140 400 260"><g fill="#0d3fb3"><rect x="231.15" y="152.05" width="2.100" height="2.100"/><rect x="587.95" y="152.05" width="2.100" height="2.100"/><rect x="231.15" y="382.25" width="2.100" height="2.100"/><rect x="587.95" y="382.25" width="2.100" height="2.100"/><rect x="405.90" y="152.05" width="2.100" height="2.100"/><rect x="405.90" y="382.25" width="2.100" height="2.100"/><rect x="231.15" y="264.00" width="2.100" height="2.100"/><rect x="587.95" y="264.00" width="2.100" height="2.100"/><rect x="409.45" y="152.05" width="2.100" height="2.100"/><rect x="409.45" y="382.25" width="2.100" height="2.100"/><rect x="231.15" y="267.55" width="2.100" height="2.100"/><rect x="587.95" y="267.55" width="2.100" height="2.100"/><rect x="413.00" y="152.05" width="2.100" height="2.100"/><rect x="413.00" y="382.25" width="2.100" height="2.100"/><rect x="231.15" y="271.10" width="2.100" height="2.100"/><rect x="587.95" y="271.10" width="2.100" height="2.100"/></g></svg>
<!-- link chip -->
<div class="abs" style="left:530px;top:121px;width:53px;height:24px;background:#fff;border-radius:2px;box-shadow:0 1px 3px rgba(60,64,67,.3),0 0 1px rgba(60,64,67,.25)"></div>
<svg class="abs" style="left:537.600px;top:129.700px" width="16" height="6.400" viewBox="0 0 16.400 7" preserveAspectRatio="none"><g fill="none" stroke="#444746" stroke-width="1.900"><path d="M7 1H3.500a2.500 2.500 0 0 0 0 5H7"/><path d="M9.400 1h3.500a2.500 2.500 0 0 1 0 5H9.400"/></g><path d="M4.800 3.500h6.800" stroke="#444746" stroke-width="1.700"/></svg>
<svg class="abs" style="left:565.500px;top:129.500px" width="12" height="7.500" viewBox="0 0 12 7.500"><path fill="none" stroke="#444746" stroke-width="1.800" d="M.8 1l5.200 5.200L11.200 1"/></svg>
<!-- resize cursor -->
<svg class="abs" style="left:647px;top:430.200px" width="19" height="19" viewBox="0 0 19 19"><path d="M1.90 2.00L8.50 2.00L6.08 4.42L14.18 11.92L16.60 9.50L16.60 16.10L10.00 16.10L12.42 13.68L4.32 6.18L1.90 8.60z" fill="#fff" stroke="#3a3a3a" stroke-width="1.100" stroke-linejoin="miter"/></svg>

<!-- watermark -->
<svg class="abs" style="left:786px;top:0" width="98" height="24" viewBox="0 0 98 24">
<path d="M23.200 12.200L28 3.300H94V21.300H28z" fill="#d9d9d9"/>
<circle cx="13.400" cy="12.300" r="9.300" fill="#1b1b2b"/>
<circle cx="13.400" cy="12.300" r="8.700" fill="none" stroke="#2a2a3c" stroke-width=".6"/>
<text x="6.700" y="18.500" font-family="Liberation Sans, sans-serif" font-weight="bold" font-size="16" fill="#f6c21a" stroke="#f6c21a" stroke-width=".5" textLength="8.600" lengthAdjust="spacingAndGlyphs">T</text>
<text x="14.600" y="18.500" font-family="Liberation Sans, sans-serif" font-weight="bold" font-size="16" fill="#ffffff" stroke="#ffffff" stroke-width=".4" textLength="6.800" lengthAdjust="spacingAndGlyphs">J</text>
<text x="27.800" y="16.100" font-family="Liberation Sans, sans-serif" font-weight="bold" font-size="11.500" fill="#e98b0e" stroke="#e98b0e" stroke-width=".45" textLength="25.500" lengthAdjust="spacingAndGlyphs">TECH</text>
<text x="53" y="16.100" font-family="Liberation Sans, sans-serif" font-weight="bold" font-size="11.500" fill="#111111" stroke="#111111" stroke-width=".45" textLength="36.500" lengthAdjust="spacingAndGlyphs">JUNKIE</text>
</svg>

</body>
</html>
